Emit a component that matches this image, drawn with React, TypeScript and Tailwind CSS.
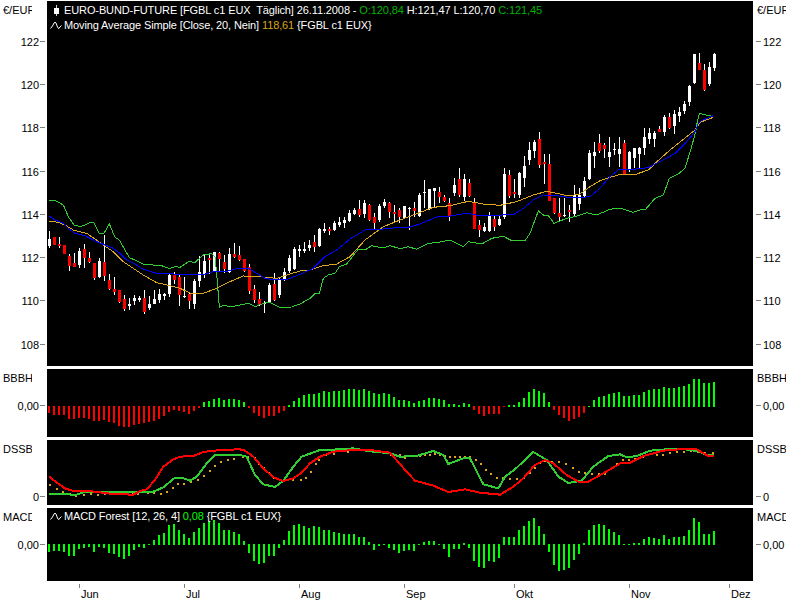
import React from 'react';

type Pt = [number, number];
// hi, lo, bodyTop, bodyBottom, red
type Candle = [number, number, number, number, number];

// readings were taken off a 3x grid, so everything below is in that grid
const grid = (pts: Pt[], dx: number, dy: number): Pt[] => pts.map(([x, y]) => [dx + x / 3, dy + y / 3]);
const toPoints = (pts: Pt[]) => pts.map(([x, y]) => `${x},${y}`).join(' ');

const candlesA: Candle[] = [
  [123, 173, 147, 168, 0], [141, 165, 141, 165, 1], [141, 173, 161, 167, 1], [165, 192, 165, 192, 1], [192, 242, 197, 228, 1],
  [190, 232, 218, 230, 1], [173, 235, 183, 226, 0], [162, 235, 177, 204, 1], [186, 219, 204, 216, 1], [219, 269, 219, 263, 1],
  [203, 265, 213, 262, 0], [135, 272, 216, 258, 1], [252, 300, 270, 297, 1], [262, 315, 297, 305, 1], [300, 338, 300, 335, 1],
  [315, 362, 328, 357, 1], [325, 360, 342, 348, 0], [315, 345, 324, 332, 0], [318, 335, 324, 331, 0], [300, 372, 324, 365, 1],
  [318, 360, 342, 355, 0], [300, 342, 328, 342, 0], [298, 340, 312, 331, 0], [308, 330, 312, 317, 0], [252, 320, 255, 312, 0],
  [247, 283, 255, 270, 1], [255, 347, 262, 315, 1], [262, 325, 318, 322, 0], [305, 357, 312, 333, 1], [267, 357, 272, 340, 0],
  [198, 290, 247, 273, 0], [195, 265, 212, 252, 0], [192, 253, 203, 210, 1], [185, 247, 187, 243, 0], [185, 245, 190, 207, 1],
  [195, 248, 215, 237, 1], [175, 250, 192, 247, 0], [158, 205, 192, 202, 1], [168, 212, 195, 210, 1], [208, 247, 208, 245, 1],
  [222, 312, 232, 305, 1], [285, 340, 297, 330, 1], [305, 347, 328, 345, 1], [333, 368, 340, 344, 0], [280, 340, 285, 338, 0],
  [250, 333, 282, 330, 1], [265, 325, 270, 315, 0], [235, 272, 247, 270, 0], [195, 250, 203, 243, 0], [172, 240, 177, 237, 0],
  [165, 200, 178, 183, 0], [157, 190, 177, 182, 0], [150, 183, 165, 175, 0], [135, 185, 157, 172, 1], [115, 172, 117, 168, 0],
  [100, 130, 117, 122, 0], [110, 135, 117, 124, 1], [92, 122, 98, 120, 0], [80, 112, 96, 105, 0], [82, 115, 90, 98, 0],
  [60, 95, 68, 92, 0], [55, 75, 60, 72, 0], [30, 80, 57, 75, 1], [30, 85, 38, 72, 0], [42, 92, 45, 90, 1],
  [70, 117, 82, 100, 1], [42, 95, 47, 90, 0], [27, 55, 37, 50, 0], [35, 85, 40, 68, 1], [45, 100, 65, 72, 1], [55, 100, 60, 82, 1],
];

const candlesB: Candle[] = [
  [228, 265, 228, 263, 0], [230, 300, 235, 238, 0], [215, 260, 233, 243, 1], [188, 262, 195, 258, 0], [150, 235, 187, 190, 0],
  [177, 240, 177, 237, 0], [175, 235, 175, 185, 0], [172, 218, 187, 202, 1], [195, 216, 202, 213, 1], [205, 272, 220, 258, 1],
  [143, 197, 165, 190, 0], [113, 200, 148, 197, 1], [133, 212, 147, 200, 0], [147, 200, 160, 200, 1], [205, 295, 218, 295, 1],
  [270, 322, 285, 300, 1], [278, 305, 290, 303, 0], [247, 305, 257, 302, 0], [255, 303, 268, 293, 1], [258, 288, 268, 285, 0],
  [115, 267, 132, 260, 0], [120, 205, 135, 197, 1], [147, 205, 185, 190, 1], [125, 203, 130, 197, 0], [78, 170, 108, 143, 0],
  [35, 105, 60, 90, 0], [30, 85, 37, 65, 0], [5, 115, 27, 105, 1], [72, 162, 95, 102, 1], [72, 212, 102, 212, 1],
  [205, 252, 205, 250, 1], [205, 272, 250, 262, 1], [203, 262, 255, 258, 0], [225, 275, 240, 245, 1], [165, 262, 195, 253, 0],
  [175, 240, 195, 222, 0], [142, 200, 152, 197, 0], [60, 150, 70, 147, 0], [35, 115, 65, 77, 0], [13, 70, 40, 65, 1],
  [40, 85, 45, 57, 1], [20, 110, 65, 80, 0], [40, 75, 57, 60, 0], [20, 112, 57, 73, 0], [30, 132, 40, 132, 1],
  [62, 125, 67, 117, 0], [55, 115, 55, 85, 0], [50, 117, 53, 72, 0], [-5, 75, 22, 55, 0], [-5, 42, 10, 27, 0],
  [2, 50, 10, 27, 0], [-12, 7, -3, 6, 1], [-45, 18, -40, 5, 0], [-50, -3, -38, -5, 1], [-60, 12, -48, -12, 0],
  [-68, -25, -55, -42, 0], [-87, -48, -78, -57, 0], [-135, -72, -133, -85, 0], [-228, -138, -228, -140, 0], [-232, -181, -201, -181, 1],
  [-198, -118, -181, -120, 1], [-205, -132, -189, -138, 0], [-232, -177, -228, -185, 0],
];

const greenBand: Pt[] = [
  ...grid([[147,31],[165,31],[190,45],[205,80],[222,105],[240,110],[255,105],[270,97],[282,99],[298,132],[312,130],[328,102],[345,142],[358,150],[372,175],[388,203],[410,212],[432,223],[460,225],[485,227],[508,236],[525,230],[540,232],[565,215],[585,217],[610,195],[635,191],[645,200],[650,250],[658,352],[672,345],[690,351],[720,345],[745,340],[765,350],[790,340],[810,337],[838,352],[875,351],[900,342],[930,325],[945,310],[958,310],[970,265],[985,255],[1005,250],[1018,230],[1040,222],[1075,177],[1095,180],[1115,167],[1150,174],[1170,167],[1200,176]], 0, 190),
  ...grid([[25,350],[50,358],[85,340],[110,338],[150,330],[190,350],[205,335],[245,342],[275,325],[310,319],[335,332],[375,332],[390,310],[415,243],[430,255],[445,257],[462,280],[500,265],[525,260],[560,248],[590,255],[630,238],[660,234],[700,247],[725,238],[735,240],[765,205],[790,195],[808,145],[835,132],[855,115],[875,50],[888,0],[890,-15],[898,-50],[940,-40]], 400, 130),
];

const blueLine: Pt[] = [
  ...grid([[147,78],[165,90],[190,100],[205,115],[225,130],[255,137],[290,155],[310,163],[340,175],[360,190],[380,210],[405,222],[430,238],[470,250],[510,251],[560,255],[610,254],[640,245],[680,244],[710,236],[745,235],[770,250],[795,265],[825,270],[865,267],[900,253],[940,235],[975,200],[1010,180],[1050,147],[1095,120],[1140,118],[1200,112]], 0, 190),
  ...grid([[25,292],[60,282],[110,261],[150,258],[200,250],[240,257],[340,254],[370,235],[400,210],[430,195],[470,197],[520,204],[570,200],[600,175],[630,140],[655,120],[700,118],[745,113],[775,97],[800,85],[825,70],[860,35],[885,5],[895,-20],[905,-28],[940,-43]], 400, 130),
];

const orangeLine: Pt[] = [
  ...grid([[147,93],[175,97],[195,105],[220,120],[260,130],[285,147],[310,165],[340,185],[370,215],[400,235],[430,255],[470,278],[510,287],[540,295],[570,309],[610,310],[650,295],[690,275],[730,258],[780,260],[830,265],[870,252],[900,243],[930,240],[970,227],[1010,222],[1050,200],[1095,150],[1150,110],[1200,90]], 0, 190),
  ...grid([[40,255],[100,232],[150,227],[205,214],[250,222],[300,226],[350,215],[400,195],[440,184],[480,192],[505,198],[540,192],[570,170],[600,152],[620,145],[665,132],[710,132],[745,120],[765,100],[810,60],[860,20],[885,0],[900,-23],[940,-38]], 400, 130),
];

// BBBH: positive entries hang below the zero line in red, negative ones stand above it in green
const bbbh: number[] = [
  160,164,165,165,177,178,173,173,177,183,182,181,187,190,197,201,201,195,191,190,185,182,176,169,155,151,153,155,161,153,143,
  -125,-122,-116,-113,-120,-118,-118,-120,-125,143,158,167,173,167,167,160,153,-134,-122,-113,-106,-102,-103,-100,-94,-95,-94,-93,-90,-87,-87,-90,-87,-93,-100,-102,-100,-103,-112,-120,
  -120,-123,-129,-122,-120,-114,-114,-118,-120,-132,-133,-134,-130,-133,150,163,167,163,163,163,141,-135,-135,-127,-113,-97,-87,-93,-100,-126,150,165,175,183,177,172,159,-138,-120,-110,-107,-101,-98,-96,-108,-108,-105,-105,-96,-90,-87,-87,-81,-84,-84,-81,-77,-72,-57,-57,-69,-69,-66,
];

const macd: number[] = [
  155,153,153,157,168,168,147,143,141,156,141,145,160,163,171,177,168,150,140,144,135,120,105,100,75,72,90,102,113,95,83,70,64,60,70,90,90,97,103,123,158,182,192,190,167,168,145,120,92,75,73,78,85,78,80,90,90,96,100,103,102,102,112,110,127,150,138,134,143,150,158,
  153,150,153,136,125,123,123,135,147,170,147,147,129,144,183,200,203,183,186,174,112,111,110,90,78,63,54,78,102,157,195,213,210,204,180,162,130,90,75,72,75,87,96,105,135,133,130,128,117,111,114,117,105,117,111,110,108,90,54,66,102,102,93,
];

const dssbRed: Pt[] = [
  ...grid([[148,350],[170,368],[195,385],[220,393],[265,393],[300,397],[340,402],[400,404],[420,393],[440,388],[465,360],[490,320],[520,298],[540,290],[580,288],[610,276],[660,270],[700,269],[712,266],[735,272],[760,290],[790,325],[820,352],[850,363],[880,355],[905,338],[930,310],[960,290],[1000,275],[1060,270],[1110,270],[1170,278],[1200,312]], 0, 360),
  ...grid([[20,335],[45,362],[100,377],[145,396],[195,388],[240,398],[300,404],[340,380],[370,355],[405,315],[435,300],[460,310],[500,345],[535,365],[565,365],[610,340],[665,308],[690,308],[730,288],[790,272],[850,267],[890,268],[925,288],[943,288]], 400, 360),
];

const dssbGreen: Pt[] = [
  ...grid([[148,402],[230,404],[250,397],[420,397],[460,395],[490,382],[525,353],[545,353],[570,362],[590,350],[620,310],[645,284],[715,284],[740,290],[765,345],[790,373],[825,381],[850,362],[880,320],[905,290],[960,270],[1020,268],[1060,265],[1110,274],[1170,280],[1200,290]], 0, 360),
  ...grid([[50,288],[100,273],[130,285],[145,312],[190,295],[210,295],[250,373],[295,385],[315,350],[345,328],[400,276],[440,300],[475,350],[505,369],[545,362],[580,320],[625,288],[660,283],[680,292],[710,288],[750,272],[800,268],[850,267],[900,275],[920,285],[943,285]], 400, 360),
];

const dssbDots: Pt[] = [
  ...grid([[148,373],[168,383],[186,393],[207,400],[225,404],[250,402],[270,400],[291,401],[312,398],[328,399],[355,398],[375,399],[395,400],[412,398],[440,397],[460,397],[480,400],[497,392],[516,380],[530,368],[548,368],[570,362],[592,357],[610,345],[627,330],[642,316],[660,303],[680,298],[700,295],[725,288],[742,288],[762,290],[775,308],[790,322],[805,335],[820,351],[845,361],[875,356],[900,357],[915,352],[930,333],[945,310],[955,297],[975,283],[1000,280],[1040,272],[1075,267],[1100,269],[1135,272],[1170,283],[1197,283]], 0, 360),
  ...grid([[13,290],[28,285],[43,285],[58,285],[73,282],[88,283],[103,279],[118,283],[133,285],[148,288],[163,288],[178,288],[193,288],[208,288],[226,298],[241,310],[256,327],[271,340],[289,352],[307,352],[328,354],[349,354],[370,352],[388,335],[403,320],[418,305],[433,300],[454,302],[475,303],[496,310],[517,320],[535,332],[553,337],[574,338],[595,340],[613,338],[631,323],[648,308],[667,298],[685,297],[703,295],[727,288],[748,280],[769,282],[787,282],[808,277],[829,272],[850,273],[871,270],[892,272],[913,275],[937,275]], 400, 360),
];

const priceTicks = [
  { label: '122', y: 41 }, { label: '120', y: 84 }, { label: '118', y: 127 }, { label: '116', y: 171 },
  { label: '114', y: 214 }, { label: '112', y: 257 }, { label: '110', y: 300 }, { label: '108', y: 344 },
];

const months = [
  { label: 'Jun', x: 79 }, { label: 'Jul', x: 184 }, { label: 'Aug', x: 299 }, { label: 'Sep', x: 404 },
  { label: 'Okt', x: 514 }, { label: 'Nov', x: 629 }, { label: 'Dez', x: 729 },
];

type Tick = { label: string; y: number };

function Pane({ unit, top, ticks, heightClass, children }: { unit: string; top: number; ticks: Tick[]; heightClass: string; children: React.ReactNode }) {
  return (
    <div className={`flex w-[786px] ${heightClass}`}>
      {/* linke Achse */}
      <div className="relative w-[47px] shrink-0 overflow-hidden">
        <div className="absolute left-[3px] top-[2px] w-[29px] overflow-hidden whitespace-nowrap">{unit}</div>
        {ticks.map((t) => (
          <div key={t.label} className="absolute left-0 flex w-[45px] -translate-y-1/2 items-center justify-end gap-px" style={{ top: t.y - top + 0.5 }}>
            <span>{t.label}</span>
            <span className="h-px w-[5px] bg-[#808080]" />
          </div>
        ))}
      </div>
      <div className="relative w-[706px] shrink-0 bg-black">{children}</div>
      {/* rechte Achse */}
      <div className="relative min-w-0 flex-1 overflow-hidden">
        <div className="absolute left-[4px] top-[2px] whitespace-nowrap">{unit}</div>
        {ticks.map((t) => (
          <div key={t.label} className="absolute left-[3px] flex -translate-y-1/2 items-center gap-[2px]" style={{ top: t.y - top + 0.5 }}>
            <span className="h-px w-[5px] bg-[#808080]" />
            <span>{t.label}</span>
          </div>
        ))}
      </div>
    </div>
  );
}

function Wave() {
  return (
    <svg width="12" height="9" viewBox="0 0 12 9" className="shrink-0" fill="none">
      <path d="M0.5 7.5L2.5 5L4 2L5 1.2L6 2L7.5 6L8.7 7.6L10 6L11.5 4.5" stroke="#fff" strokeWidth="1" />
    </svg>
  );
}

function Chart({ top, height, children }: { top: number; height: number; children: React.ReactNode }) {
  return (
    <svg width="706" height={height} viewBox={`47 ${top} 706 ${height}`} className="absolute inset-0" shapeRendering="crispEdges">
      {children}
    </svg>
  );
}

function Candles({ data, start, dy }: { data: Candle[]; start: number; dy: number }) {
  return (
    <>
      {data.map(([hi, lo, a, b, red], i) => {
        const x = 48 + (start + i) * 5;
        const bodyTop = Math.round(dy + a / 3);
        const color = red ? '#ff0000' : '#ffffff';
        return (
          <g key={i}>
            <rect x={x + 1} y={dy + hi / 3} width="1" height={(lo - hi) / 3} fill="#ffffff" />
            <rect x={x} y={bodyTop} width="3" height={Math.max(1, Math.round((b - a) / 3))} fill={color} />
          </g>
        );
      })}
    </>
  );
}

export default function App() {
  return (
    <div className="flex h-[600px] w-[800px] flex-col gap-[3px] overflow-hidden bg-white pt-px font-['Liberation_Sans',Arial,sans-serif] text-[11px] leading-[14px] text-black">
      <Pane unit="€/EUR" top={1} ticks={priceTicks} heightClass="h-[365px]">
        <Chart top={1} height={365}>
          <Candles data={candlesA} start={0} dy={190} />
          <Candles data={candlesB} start={71} dy={130} />
          <polyline points={toPoints(greenBand)} fill="none" stroke="#32cd32" strokeWidth="1" />
          <polyline points={toPoints(orangeLine)} fill="none" stroke="#daa520" strokeWidth="1" />
          <polyline points={toPoints(blueLine)} fill="none" stroke="#0000ff" strokeWidth="1" />
        </Chart>
        <div className="absolute left-[7px] top-[2px] flex items-center gap-[3px] whitespace-nowrap text-white">
          <svg width="5" height="11" viewBox="0 0 5 11" className="shrink-0" shapeRendering="crispEdges">
            <rect x="2" y="0" width="1" height="11" fill="#d0d0d0" />
            <rect x="0" y="3" width="5" height="6" fill="#fff" />
          </svg>
          <span className="ml-[2px] tracking-[-0.11px]">
            EURO-BUND-FUTURE [FGBL c1 EUX&nbsp; Täglich] 26.11.2008 - <span className="text-[#00b400]">O:120,84</span> H:121,47 L:120,70 <span className="text-[#00b400]">C:121,45</span>
          </span>
        </div>
        <div className="absolute left-[3px] top-[17px] flex items-center gap-[2px] whitespace-nowrap text-white">
          <Wave />
          <span className="tracking-[-0.12px]">
            Moving Average Simple [Close, 20, Nein] <span className="text-[#daa520]">118,61</span> {'{FGBL c1 EUX}'}
          </span>
        </div>
      </Pane>

      <Pane unit="BBBH" top={369} ticks={[{ label: '0,00', y: 405 }]} heightClass="h-[68px]">
        <Chart top={369} height={68}>
          {bbbh.map((v, i) => {
            const x = 48 + i * 5;
            if (v < 0) {
              const y = 360 + Math.round(-v / 3);
              return <rect key={i} x={x} y={y} width="2" height={407 - y} fill="#00ff00" />;
            }
            const end = Math.round(360 + v / 3);
            return <rect key={i} x={x} y={406} width="2" height={end - 406} fill="#ff0000" />;
          })}
        </Chart>
      </Pane>

      <Pane unit="DSSB" top={440} ticks={[{ label: '0', y: 496 }]} heightClass="h-[65px]">
        <Chart top={440} height={65}>
          {dssbDots.map(([x, y], i) => (
            <rect key={i} x={Math.round(x)} y={Math.round(y)} width="2" height="2" fill="#daa520" />
          ))}
          <polyline points={toPoints(dssbGreen)} fill="none" stroke="#32cd32" strokeWidth="2" />
          <polyline points={toPoints(dssbRed)} fill="none" stroke="#ff0000" strokeWidth="2" />
        </Chart>
      </Pane>

      <Pane unit="MACD" top={508} ticks={[{ label: '0,00', y: 544 }]} heightClass="h-[73px]">
        <Chart top={508} height={73}>
          {macd.map((v, i) => {
            const x = 48 + i * 5;
            const end = Math.round(500 + v / 3);
            return end >= 544 ? (
              <rect key={i} x={x} y={544} width="2" height={Math.max(1, end - 544)} fill="#00ff00" />
            ) : (
              <rect key={i} x={x} y={end} width="2" height={545 - end} fill="#00ff00" />
            );
          })}
        </Chart>
        <div className="absolute left-[3px] top-[1px] flex items-center gap-[2px] whitespace-nowrap text-white">
          <Wave />
          <span className="tracking-[-0.12px]">
            MACD Forest [12, 26, 4] <span className="text-[#00ff00]">0,08</span> {'{FGBL c1 EUX}'}
          </span>
        </div>
      </Pane>

      {/* Zeitachse */}
      <div className="relative -mt-[3px] h-[19px] w-[786px]">
        {months.map((m) => (
          <div key={m.label} className="absolute top-[3px]" style={{ left: m.x }}>
            <div className="h-[4px] w-px bg-[#808080]" />
            <div className="-mt-px ml-[2px]">{m.label}</div>
          </div>
        ))}
      </div>
    </div>
  );
}
